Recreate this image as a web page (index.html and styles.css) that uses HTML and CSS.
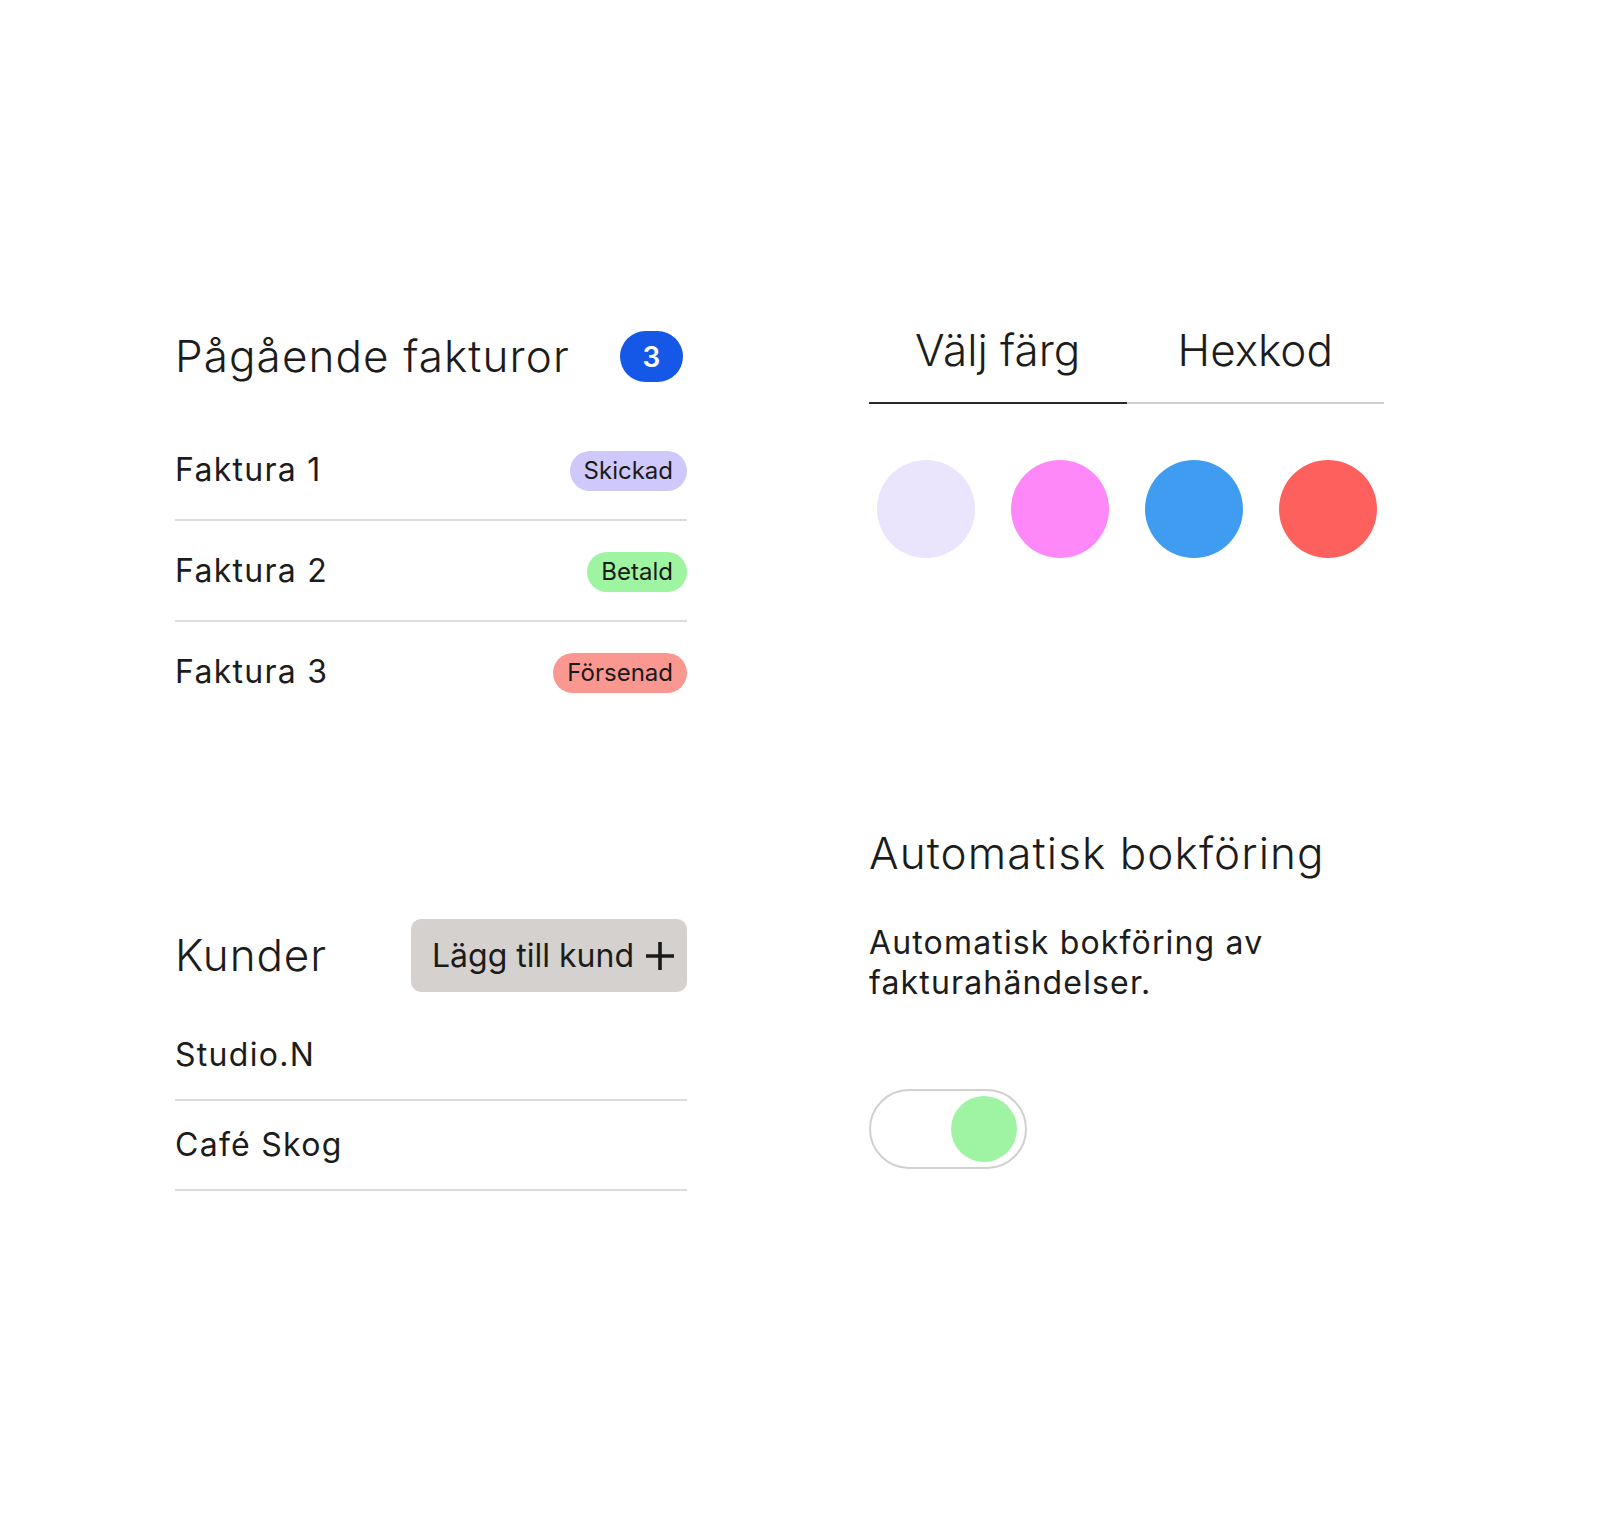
FILE: index.html
```html
<!DOCTYPE html>
<html lang="sv">
<head>
<meta charset="utf-8">
<title>Fakturor</title>
<link rel="stylesheet" href="styles.css">
</head>
<body>
<main class="board">
  <div class="col col-left">
    <section class="invoices">
      <header class="invoices-head">
        <h2 class="title">Pågående fakturor</h2>
        <span class="count">3</span>
      </header>
      <ul class="invoice-list">
        <li class="invoice-row"><span class="label">Faktura 1</span><span class="status status-sent">Skickad</span></li>
        <li class="invoice-row"><span class="label">Faktura 2</span><span class="status status-paid">Betald</span></li>
        <li class="invoice-row"><span class="label">Faktura 3</span><span class="status status-late">Försenad</span></li>
      </ul>
    </section>
    <section class="customers">
      <header class="customers-head">
        <h2 class="title title-sm">Kunder</h2>
        <button class="add-btn" type="button">Lägg till kund
          <svg class="plus" viewBox="0 0 30 30" width="30" height="30" aria-hidden="true"><path d="M15 1v28M1 15h28" stroke="#1a1a1a" stroke-width="3.6" fill="none"/></svg>
        </button>
      </header>
      <ul class="customer-list">
        <li class="customer-row"><span class="label">Studio.N</span></li>
        <li class="customer-row"><span class="label">Café Skog</span></li>
      </ul>
    </section>
  </div>
  <div class="col col-right">
    <section class="picker">
      <div class="tabs">
        <div class="tab tab-active">Välj färg</div>
        <div class="tab">Hexkod</div>
      </div>
      <div class="swatches">
        <span class="swatch sw-lavender"></span>
        <span class="swatch sw-pink"></span>
        <span class="swatch sw-blue"></span>
        <span class="swatch sw-red"></span>
      </div>
    </section>
    <section class="auto">
      <h2 class="title">Automatisk bokföring</h2>
      <p class="desc">Automatisk bokföring av fakturahändelser.</p>
      <div class="toggle" role="switch" aria-checked="true"><span class="knob"></span></div>
    </section>
  </div>
</main>
</body>
</html>
```

FILE: styles.css
```css
* { box-sizing: border-box; }
html, body { margin: 0; padding: 0; background: #ffffff; }
body {
  font-family: Inter, "Noto Sans", "Liberation Sans", sans-serif;
  color: #1c1c1c;
  width: 1600px;
  min-height: 1523px;
}
ul { list-style: none; margin: 0; padding: 0; }
h2, p { margin: 0; }

.board {
  display: grid;
  grid-template-columns: 512px 515px;
  column-gap: 182px;
  padding-left: 175px;
}
.col { display: flex; flex-direction: column; }
.col-left { padding-top: 330px; }
.col-right { padding-top: 324px; }

.title {
  font-size: 44px;
  font-weight: 300;
  line-height: 1.21;
  letter-spacing: 0.025em;
}
.title-sm { letter-spacing: 0.02em; }

.label { font-size: 32px; font-weight: 400; line-height: 1.21; letter-spacing: 0.04em; }

/* invoices */
.invoices-head { display: flex; align-items: center; gap: 50px; }
.count {
  width: 63px; height: 51px;
  border-radius: 26px;
  background: #1557e6;
  color: #fff;
  font-size: 28px; font-weight: 600;
  display: flex; align-items: center; justify-content: center;
}
.invoice-list { margin-top: 37px; }
.invoice-row {
  height: 101px;
  display: flex; align-items: center; justify-content: space-between;
  border-bottom: 2px solid #dcdcdc;
  padding-top: 2px;
}
.invoice-row:last-child { border-bottom: none; height: 99px; }
.status {
  height: 40px; padding: 0 14px;
  border-radius: 20px;
  font-size: 24px; line-height: 40px;
  color: #1a1a1a;
}
.status-sent { background: #cfc8fb; }
.status-paid { background: #9ef4a0; }
.status-late { background: #fb9791; }

/* customers */
.customers { margin-top: 198px; }
.customers-head { display: flex; align-items: center; justify-content: space-between; }
.add-btn {
  height: 73px;
  display: flex; align-items: center; gap: 11px;
  padding: 0 12px 0 21px;
  border: none; border-radius: 10px;
  background: #d5d1ce;
  font-family: inherit; font-size: 32px; font-weight: 400; color: #1c1c1c;
}
.plus { display: block; }
.customer-list { margin-top: 19px; }
.customer-row {
  height: 90px;
  display: flex; align-items: center;
  border-bottom: 2px solid #dcdcdc;
}

/* color picker */
.tabs { display: flex; }
.tab {
  flex: 1;
  text-align: center;
  font-size: 44px; font-weight: 300; line-height: 1.21;
  padding-bottom: 25px;
  border-bottom: 2px solid #cfcfcf;
}
.tab-active { border-bottom-color: #2a2a2a; }
.swatches {
  margin-top: 56px;
  display: flex; justify-content: center; gap: 36px;
}
.swatch { width: 98px; height: 98px; border-radius: 50%; }
.sw-lavender { background: #eae4fd; }
.sw-pink { background: #ff88f9; }
.sw-blue { background: #3f9cf1; }
.sw-red { background: #fe605e; }

/* auto bookkeeping */
.auto { margin-top: 269px; }
.desc { margin-top: 43px; font-size: 32px; line-height: 40px; font-weight: 400; letter-spacing: 0.036em; }
.toggle {
  margin-top: 86px;
  width: 158px; height: 80px;
  border: 2px solid #d3cfcf; border-radius: 40px;
  display: flex; align-items: center; justify-content: flex-end;
  padding-right: 8px;
  background: #fff;
}
.knob { width: 66px; height: 66px; border-radius: 50%; background: #9ef4a3; }
```
